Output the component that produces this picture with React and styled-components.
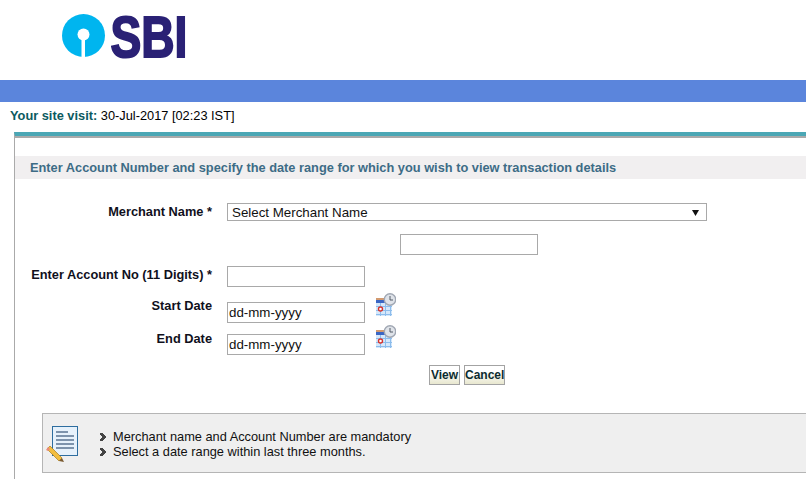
import React from "react";
import styled, { createGlobalStyle } from "styled-components";

const Global = createGlobalStyle`
  html, body { margin: 0; padding: 0; background: #fff; overflow: hidden; }
  body { font-family: "Liberation Sans", Arial, sans-serif; font-size: 12.8px; color: #000; }
`;
const Page = styled.div`width: 806px; height: 479px; overflow: hidden;`;
const Header = styled.header`height: 80px; padding: 14px 0 0 62px; box-sizing: border-box;`;
const BlueBar = styled.div`height: 22px; background: #5b85dc;`;
const Visit = styled.div`height: 30px; padding: 6px 0 0 10px; box-sizing: border-box; font-size: 12.8px; line-height: 16px; color: #000;`;
const VisitLabel = styled.b`color: #0b5a60;`;
const Panel = styled.section`
  margin-left: 14px; border-top: 4px solid #4ba7b5; border-left: 1px solid #aaa; height: 347px; box-sizing: border-box;
  &::before { content: ""; display: block; height: 2px; background: #aaa; margin-left: -1px; }
`;
const Title = styled.h2`
  margin: 18px 0 0; height: 23px; background: #f1eff0; padding-left: 15px; font-size: 12.8px; line-height: 23px; font-weight: bold; color: #3d6c86;
`;
const Form = styled.div`
  display: grid; grid-template-columns: 197px 1fr; column-gap: 15px; margin-top: 24px;
`;
const Label = styled.label`
  text-align: right; font-weight: bold; font-size: 12.8px; line-height: 14px; color: #10101c; height: ${p => p.$h}px; padding-top: ${p => p.$pt}px; box-sizing: border-box; transform: translateY(${p => p.$dy || 0}px);
`;
const Field = styled.div`display: flex; align-items: flex-start; height: ${p => p.$h}px; padding-left: ${p => p.$pl || 0}px;`;
const Select = styled.div`
  width: 480px; height: 18px; box-sizing: border-box; border: 1px solid #a9a9a9; font-size: 13.33px; line-height: 16px; padding: 1px 7px 0 4px; display: flex; justify-content: space-between; align-items: center; color: #111;
`;
const Arrow = styled.svg`width: 7px; height: 6px; display: block;`;
const Input = styled.input`
  width: 138px; height: 21px; box-sizing: border-box; border: 1px solid #a9a9a9; background: #fff; padding: 0 1px; margin: 0; font: 13.33px "Liberation Sans", Arial, sans-serif; color: #111;
  &::placeholder { color: #111; opacity: 1; }
`;
const CalIcon = styled.svg`width: 20px; height: 24px; margin: -9px 0 0 11px; display: block; flex: none;`;
const Buttons = styled.div`display: flex; gap: 4px; margin: -1px 0 0 414px;`;
const Btn = styled.button`
  height: 20px; box-sizing: border-box; padding: 0; border: 1px solid #a3a3a3; background: linear-gradient(#fff 0 30%, #e8e7cf 100%); font: bold 12px/16px "Liberation Sans", Arial, sans-serif; color: #0c2c30; width: ${p => p.$w}px;
`;
const Note = styled.div`
  margin: 28px 0 0 27px; height: 60px; box-sizing: border-box; background: #efefef; border: 1px solid #b5b5b5; border-right: 0; display: flex; align-items: center; padding-left: 2px;
`;
const NoteIcon = styled.svg`width: 36px; height: 38px; flex: none; margin-top: 2px;`;
const NoteList = styled.ul`list-style: none; margin: 2px 0 0 19px; padding: 0; font-size: 12.8px; line-height: 15px; color: #111;`;
const NoteItem = styled.li`
  display: flex; align-items: center; gap: 7px;
`;
const Bullet = styled.svg`width: 6px; height: 8px; flex: none;`;

const Logo = () => (
  <svg width="160" height="60" viewBox="0 0 160 60" style={{ display: "block" }}>
    <circle cx="21.5" cy="21.5" r="21.5" fill="#00b5ef" />
    <circle cx="21.5" cy="20.5" r="6" fill="#fff" />
    <rect x="19.5" y="22" width="3.5" height="21" fill="#fff" />
    <text transform="translate(48.5 42.5) scale(0.796 1)" fontFamily="Liberation Sans" fontWeight="bold" fontSize="58" fill="#2a2175" stroke="#2a2175" strokeWidth="2">SBI</text>
  </svg>
);

const Calendar = () => (
  <CalIcon viewBox="0 0 20 24">
    <rect x="0" y="5" width="16" height="18" fill="#d5e8fb" />
    <rect x="0" y="5" width="13" height="2" fill="#d29a70" />
    <rect x="0" y="7" width="11" height="3" fill="#3a66c4" />
    <path d="M0 13.5h16M0 17.5h16M0 21.5h16M4.5 10v13M9.5 10v13M14.5 10v13" stroke="#8dbdec" strokeWidth="1" />
    <circle cx="4.5" cy="16" r="2" fill="#fff" stroke="#d8322b" strokeWidth="1.4" />
    <circle cx="14" cy="6.5" r="5.7" fill="#dfe3e9" stroke="#a0a7b3" strokeWidth="1.4" />
    <path d="M14 3v4h3" fill="none" stroke="#555c68" strokeWidth="1" />
  </CalIcon>
);

const Mark = () => (
  <Bullet viewBox="0 0 6 8">
    <path d="M0 0h3v1h1v1h1v1h1v2h-1v1h-1v1h-1v1h-3v-2h1v-1h1v-2h-1v-1h-1z" fill="#444" />
  </Bullet>
);

export default function App() {
  return (
    <Page>
      <Global />
      <Header><Logo /></Header>
      <BlueBar />
      <Visit><VisitLabel>Your site visit:</VisitLabel> 30-Jul-2017 [02:23 IST]</Visit>
      <Panel>
        <Title>Enter Account Number and specify the date range for which you wish to view transaction details</Title>
        <Form>
          <Label $h={31} $pt={2}>Merchant Name *</Label>
          <Field $h={31}>
            <Select>Select Merchant Name<Arrow viewBox="0 0 7 6"><path d="M0 0h7L3.5 6z" fill="#111" /></Arrow></Select>
          </Field>
          <Label $h={32} />
          <Field $h={32} $pl={173}><Input /></Field>
          <Label $h={36} $pt={2}>Enter Account No (11 Digits) *</Label>
          <Field $h={36}><Input /></Field>
          <Label $h={32} $dy={-3}>Start Date</Label>
          <Field $h={32}><Input placeholder="dd-mm-yyyy" /><Calendar /></Field>
          <Label $h={32} $dy={-2}>End Date</Label>
          <Field $h={32}><Input placeholder="dd-mm-yyyy" /><Calendar /></Field>
        </Form>
        <Buttons>
          <Btn $w={31}>View</Btn>
          <Btn $w={41}>Cancel</Btn>
        </Buttons>
        <Note>
          <NoteIcon viewBox="0 0 36 38">
            <rect x="7.5" y="1.5" width="25" height="29" fill="#e6f1fb" stroke="#2d6d9f" />
            <path d="M11 7h12M11 11h18M11 15h18M11 19h18M11 23h18" stroke="#7d93ac" strokeWidth="1.8" />
            <path d="M2 24l3-3 12 12-3 3z" fill="#f2bd3f" stroke="#a87b20" strokeWidth=".7" />
            <path d="M1 25l2-3 2 2-2 2z" fill="#ea8a7a" />
            <path d="M14 36l3-3 2 4z" fill="#7a5a30" />
          </NoteIcon>
          <NoteList>
            <NoteItem><Mark />Merchant name and Account Number are mandatory</NoteItem>
            <NoteItem><Mark />Select a date range within last three months.</NoteItem>
          </NoteList>
        </Note>
      </Panel>
    </Page>
  );
}
